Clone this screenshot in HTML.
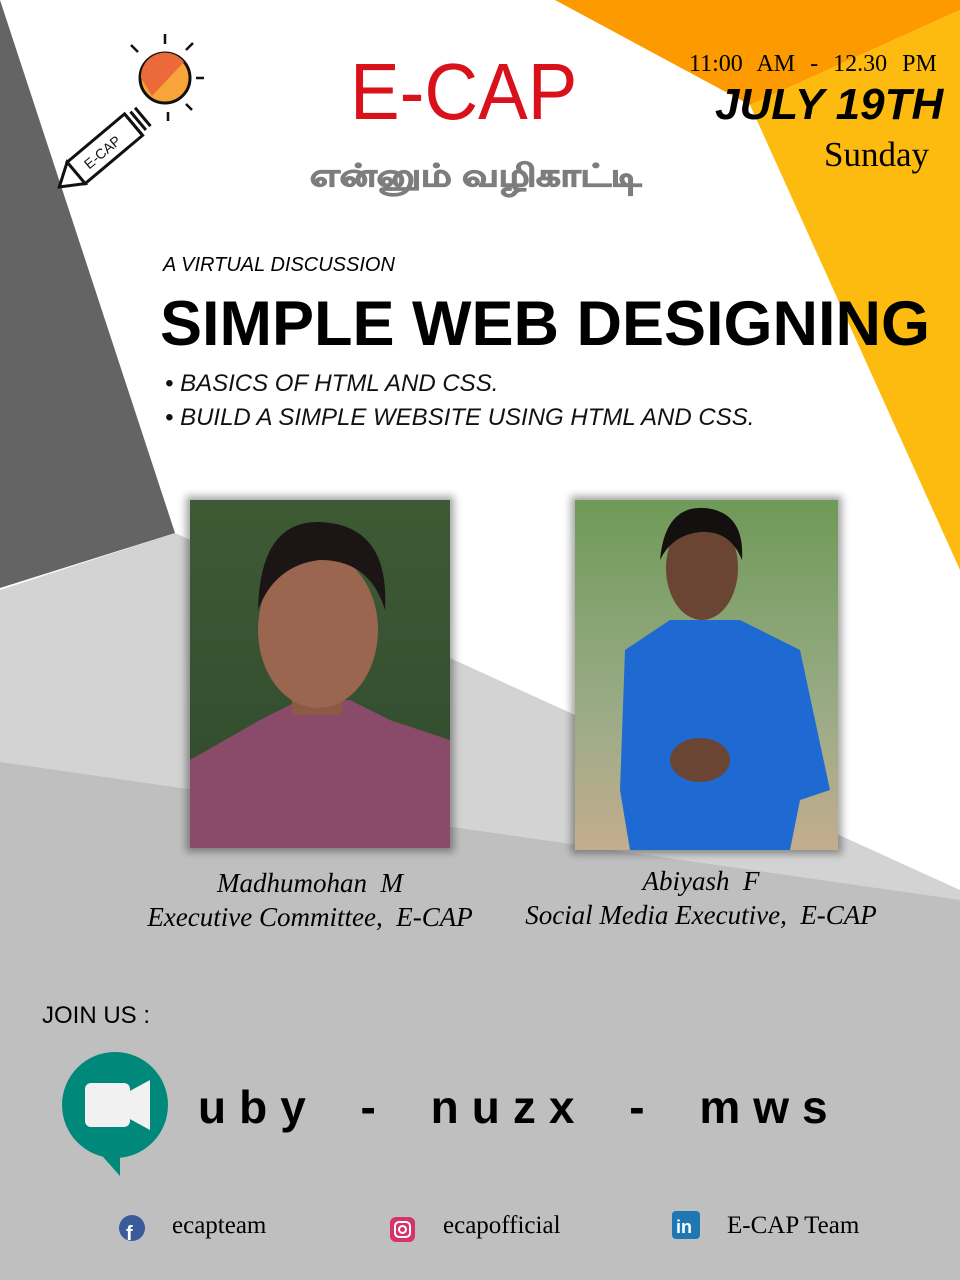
<!DOCTYPE html>
<html><head><meta charset="utf-8"><style>
*{margin:0;padding:0}
body{width:960px;height:1280px;position:relative;overflow:hidden;background:#fff;font-family:"Liberation Sans",sans-serif}
.a{position:absolute;white-space:nowrap}
.serif{font-family:"Liberation Serif",serif}
</style></head><body>
<svg class="a" style="left:0;top:0" width="960" height="1280">
<polygon points="0,590 175,533 960,890 960,1280 0,1280" fill="#d3d3d3"/>
<polygon points="0,762 960,900 960,1280 0,1280" fill="#bfbfbf"/>
<polygon points="0,0 175,533 0,588" fill="#646464"/>
<polygon points="555,0 960,0 960,10 750,105" fill="#fd9a00"/>
<polygon points="750,105 960,10 960,570" fill="#fdbb0f"/>
<g transform="translate(70,178) rotate(-40)">
<rect x="8" y="-14" width="75" height="28" fill="#fff" stroke="#111" stroke-width="3"/>
<polygon points="8,-14 -14,0 8,14" fill="#fff" stroke="#111" stroke-width="3"/>
<path d="M83,-12 v24 M89,-12 v24 M95,-12 v24" stroke="#111" stroke-width="3"/>
<text x="20" y="6" font-size="14" font-family="Liberation Sans" fill="#111">E-CAP</text>
</g>
<circle cx="165" cy="78" r="25" fill="#f7a43a" stroke="#111" stroke-width="3"/>
<path d="M141,78 A24,24 0 0 1 184,62 L152,96 Z" fill="#ec6a3a"/>
<path d="M165,44v-10M186,50l7,-7M196,78h8M186,104l6,6M138,52l-7,-7M168,112v9" stroke="#111" stroke-width="2.5"/>
<defs>
<linearGradient id="g1" x1="0" y1="0" x2="0" y2="1"><stop offset="0" stop-color="#3e5a35"/><stop offset="1" stop-color="#2f4a2c"/></linearGradient>
<linearGradient id="g2" x1="0" y1="0" x2="0" y2="1"><stop offset="0" stop-color="#6f9a58"/><stop offset="0.6" stop-color="#9aab86"/><stop offset="1" stop-color="#c3ad8e"/></linearGradient>
<filter id="sh"><feGaussianBlur stdDeviation="4"/></filter>
</defs>
<rect x="186" y="496" width="268" height="356" fill="#000" opacity=".35" filter="url(#sh)"/>
<rect x="190" y="500" width="260" height="348" fill="url(#g1)"/>
<path d="M190,760 L260,720 L300,700 L350,700 L390,720 L450,740 V848 H190Z" fill="#8a4a6a"/>
<rect x="292" y="670" width="50" height="45" fill="#8b5a44"/>
<ellipse cx="318" cy="630" rx="60" ry="78" fill="#9a6650"/>
<path d="M258,610 Q260,520 320,522 Q390,525 385,610 Q370,560 320,560 Q275,565 258,610Z" fill="#1c1515"/>
<rect x="571" y="496" width="271" height="358" fill="#000" opacity=".35" filter="url(#sh)"/>
<rect x="575" y="500" width="263" height="350" fill="url(#g2)"/>
<path d="M625,650 L670,620 L740,620 L800,650 L830,790 L800,800 L790,850 H630 L620,790Z" fill="#1f6ad2"/>
<ellipse cx="702" cy="568" rx="36" ry="52" fill="#6b4534"/>
<path d="M660,560 Q665,505 705,508 Q745,512 742,560 Q730,530 700,532 Q672,535 660,560Z" fill="#151010"/>
<ellipse cx="700" cy="760" rx="30" ry="22" fill="#6b4534"/>
<circle cx="115" cy="1105" r="53" fill="#00897b"/>
<polygon points="88,1140 120,1155 120,1176 " fill="#00897b"/>
<rect x="85" y="1083" width="45" height="44" rx="6" fill="#f1f1f1"/>
<polygon points="128,1092 150,1080 150,1130 128,1118" fill="#f1f1f1"/>
<circle cx="132" cy="1228" r="13" fill="#3b5a9b"/>
<text x="126" y="1240" font-size="20" font-weight="bold" fill="#fff" font-family="Liberation Sans">f</text>
<rect x="390" y="1217" width="25" height="25" rx="6" fill="#d6336c"/>
<rect x="395" y="1222" width="15" height="15" rx="4" fill="none" stroke="#fff" stroke-width="2"/>
<circle cx="402.5" cy="1229.5" r="3.5" fill="none" stroke="#fff" stroke-width="2"/>
<rect x="672" y="1211" width="28" height="28" rx="4" fill="#1f78b4"/>
<text x="676" y="1233" font-size="18" font-weight="bold" fill="#fff" font-family="Liberation Sans">in</text>
</svg>
<div class="a" style="left:350px;top:46px;font-size:80px;color:#d8111a;transform:scaleX(0.93);transform-origin:left top">E-CAP</div>
<div class="a" style="left:310px;top:158px;font-size:31px;font-weight:bold;color:#7d7d7d;font-family:'Liberation Sans',sans-serif;transform:scaleX(1.23);transform-origin:left top;-webkit-text-stroke:1.2px #7d7d7d">என்னும் வழிகாட்டி</div>
<div class="a serif" style="left:689px;top:51px;font-size:24px;word-spacing:9px">11:00 AM - 12.30 PM</div>
<div class="a" style="left:715px;top:80px;font-size:44px;font-weight:bold;font-style:italic">JULY 19TH</div>
<div class="a serif" style="left:824px;top:135px;font-size:35px">Sunday</div>
<div class="a" style="left:163px;top:254px;font-size:20px;font-style:italic">A VIRTUAL DISCUSSION</div>
<div class="a" style="left:160px;top:288px;font-size:63px;font-weight:bold">SIMPLE WEB DESIGNING</div>
<div class="a" style="left:165px;top:370px;font-size:24px;font-style:italic;color:#111">• BASICS OF HTML AND CSS.</div>
<div class="a" style="left:165px;top:404px;font-size:24px;font-style:italic;color:#111">• BUILD A SIMPLE WEBSITE USING HTML AND CSS.</div>
<div class="a serif" style="left:140px;top:866px;width:340px;text-align:center;font-size:27px;font-style:italic;line-height:34px">Madhumohan&nbsp; M<br>Executive Committee,&nbsp; E-CAP</div>
<div class="a serif" style="left:515px;top:864px;width:372px;text-align:center;font-size:27px;font-style:italic;line-height:34px">Abiyash&nbsp; F<br>Social Media Executive,&nbsp; E-CAP</div>
<div class="a" style="left:42px;top:1002px;font-size:24px">JOIN US :</div>
<div class="a" style="left:198px;top:1080px;font-size:46px;font-weight:bold;letter-spacing:13px;word-spacing:16px">uby - nuzx - mws</div>
<div class="a serif" style="left:172px;top:1212px;font-size:25px">ecapteam</div>
<div class="a serif" style="left:443px;top:1212px;font-size:25px">ecapofficial</div>
<div class="a serif" style="left:727px;top:1212px;font-size:25px">E-CAP Team</div>
</body></html>
